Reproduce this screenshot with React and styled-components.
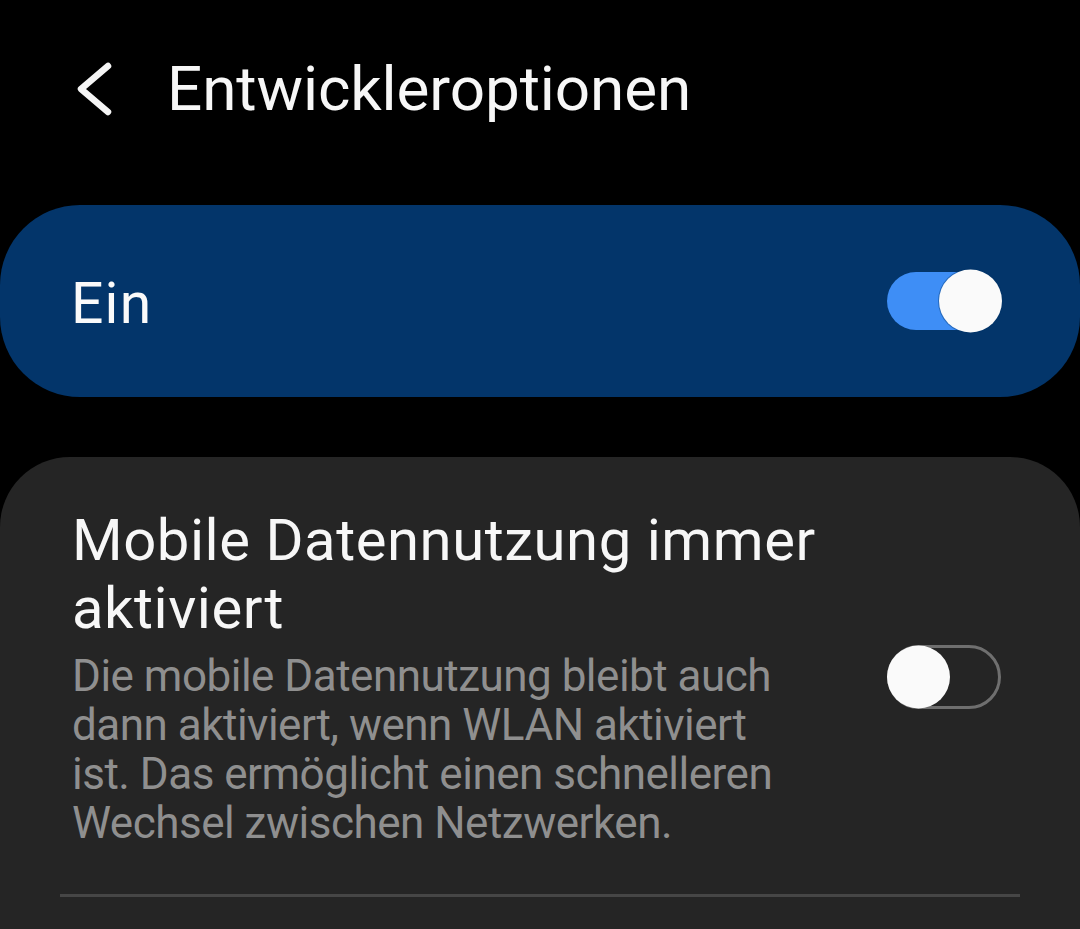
import React from "react";
import styled, { createGlobalStyle } from "styled-components";

const Global = createGlobalStyle`
  html, body { margin: 0; padding: 0; background: #000; }
  body { font-family: Roboto, "Noto Sans", "Liberation Sans", sans-serif; overflow: hidden; }
`;

const Page = styled.div`
  width: 1080px;
  height: 929px;
  background: #000;
  overflow: hidden;
  display: flex;
  flex-direction: column;
`;

const Header = styled.header`
  display: flex;
  align-items: center;
  height: 80px;
  padding: 49px 0 0 74px;
  gap: 53px;
`;

const BackButton = styled.button`
  display: flex;
  align-items: center;
  justify-content: center;
  width: 40px;
  height: 56px;
  padding: 0;
  border: none;
  background: transparent;
  color: #f5f5f5;
`;

const Title = styled.h1`
  margin: 0;
  font-size: 62px;
  line-height: 80px;
  font-weight: 400;
  letter-spacing: -0.1px;
  color: #f7f7f7;
`;

const MasterCard = styled.div`
  margin-top: 76px;
  height: 192px;
  border-radius: 80px;
  background: #03356a;
  display: flex;
  align-items: center;
  justify-content: space-between;
  padding: 0 79px 0 71px;
  box-sizing: border-box;
`;

const MasterLabel = styled.span`
  font-size: 57px;
  letter-spacing: 1.2px;
  color: #fafafa;
  padding-top: 5px;
`;

const SettingsCard = styled.div`
  margin-top: 60px;
  flex: 1;
  background: #252525;
  border-radius: 70px 70px 0 0;
  padding: 49px 0 0;
  display: flex;
  flex-direction: column;
`;

const Row = styled.div`
  display: flex;
  align-items: center;
  justify-content: space-between;
  padding: 0 79px 0 72px;
`;

const RowText = styled.div`
  width: 720px;
  display: flex;
  flex-direction: column;
`;

const RowTitle = styled.div`
  font-size: 58px;
  line-height: 68px;
  letter-spacing: 0.55px;
  color: #f7f7f7;
  margin-right: -80px;
`;

const RowDesc = styled.div`
  margin-top: 10px;
  font-size: 44px;
  line-height: 49px;
  letter-spacing: -0.5px;
  color: #8f8f8f;
`;

const Divider = styled.hr`
  margin: 46px 60px 0;
  border: none;
  height: 3px;
  background: #464646;
`;

const Track = styled.div`
  position: relative;
  width: 114px;
  height: ${(p) => (p.$on ? "58px" : "64px")};
  box-sizing: border-box;
  border-radius: 40px;
  background: ${(p) => (p.$on ? "#3e8ef6" : "transparent")};
  border: ${(p) => (p.$on ? "none" : "3px solid #6f6f6f")};
`;

const Knob = styled.div`
  position: absolute;
  top: 50%;
  ${(p) => (p.$on ? "right: -1px;" : "left: -3px;")}
  width: 63px;
  height: 63px;
  transform: translateY(-50%);
  border-radius: 50%;
  background: #fafafa;
  box-shadow: ${(p) => (p.$on ? "0 0 0 1px rgba(3,53,106,0.4)" : "none")};
`;

const Switch = ({ on }) => (
  <Track $on={on}>
    <Knob $on={on} />
  </Track>
);

export default function App() {
  return (
    <Page>
      <Global />
      <Header>
        <BackButton aria-label="Zurück">
          <svg width="40" height="56" viewBox="0 0 40 56">
            <path
              d="M34 5 L7 28 L34 51"
              fill="none"
              stroke="currentColor"
              strokeWidth="6.5"
              strokeLinecap="round"
              strokeLinejoin="round"
            />
          </svg>
        </BackButton>
        <Title>Entwickleroptionen</Title>
      </Header>
      <MasterCard>
        <MasterLabel>Ein</MasterLabel>
        <Switch on />
      </MasterCard>
      <SettingsCard>
        <Row>
          <RowText>
            <RowTitle>Mobile Datennutzung immer aktiviert</RowTitle>
            <RowDesc>
              Die mobile Datennutzung bleibt auch dann aktiviert, wenn WLAN
              aktiviert ist. Das ermöglicht einen schnelleren Wechsel zwischen
              Netzwerken.
            </RowDesc>
          </RowText>
          <Switch on={false} />
        </Row>
        <Divider />
      </SettingsCard>
    </Page>
  );
}
